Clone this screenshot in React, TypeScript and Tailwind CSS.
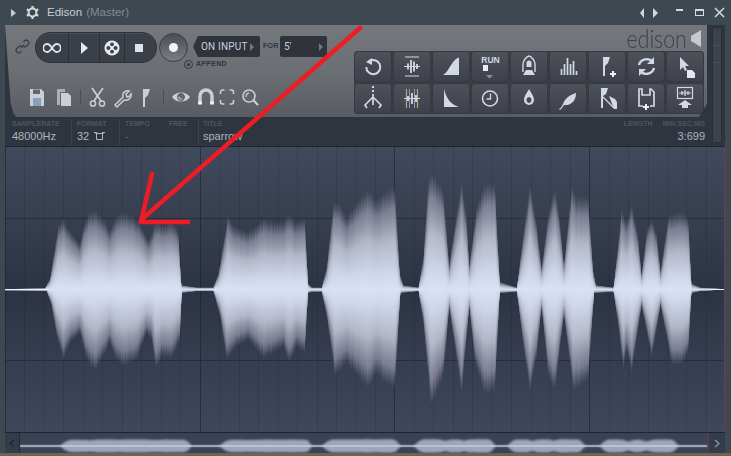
import React from "react";

const z3 = (p: number[]) => [p[0] / 3, p[1] / 3 + 150];
const z4 = (p: number[]) => [p[0] / 3 + 360, p[1] / 3 + 150];
const up3 = [[15,416],[135,414],[150,385],[160,320],[175,225],[190,205],[205,235],[240,280],[250,230],[265,190],[285,180],[310,205],[330,240],[345,205],[365,185],[395,195],[420,220],[445,270],[455,250],[468,215],[490,225],[515,215],[535,240],[545,405],[590,412],[640,412],[655,370],[670,280],[683,195],[700,225],[740,245],[760,235],[790,205],[820,215],[850,215],[868,190],[885,215],[915,205],[925,400],[935,412],[965,412],[980,350],[1000,160],[1015,155],[1040,200],[1075,150]];
const up4 = [[25,118],[50,150],[75,125],[105,110],[120,370],[130,405],[175,412],[190,320],[205,90],[215,65],[250,120],[268,340],[285,220],[305,95],[320,200],[328,340],[350,170],[375,100],[405,100],[420,395],[470,412],[490,250],[510,100],[530,220],[545,350],[565,190],[585,110],[600,210],[612,340],[635,105],[650,140],[685,140],[700,360],[708,405],[760,412],[770,320],[785,175],[800,215],[815,160],[835,260],[845,370],[860,240],[875,205],[890,250],[902,360],[925,195],[945,190],[965,185],[985,200],[995,400],[1020,412],[1090,416]];
const lo3 = [[15,422],[140,424],[155,470],[170,560],[190,630],[210,580],[240,550],[260,630],[285,665],[310,620],[330,580],[345,625],[370,650],[410,630],[440,550],[455,570],[468,660],[485,620],[515,625],[540,570],[546,430],[590,424],[640,424],[660,500],[680,630],[710,590],[745,570],[790,625],[820,610],[850,590],[868,640],[890,590],[915,610],[925,430],[935,426],[965,426],[980,500],[1005,680],[1040,640],[1075,680]];
const lo4 = [[25,715],[50,670],[75,700],[105,715],[122,430],[175,424],[190,520],[213,770],[250,680],[268,480],[305,735],[328,480],[345,640],[375,735],[405,720],[420,430],[470,426],[490,590],[510,730],[530,620],[545,480],[565,680],[585,725],[612,500],[640,725],[685,690],[703,430],[760,426],[775,530],[790,660],[800,600],[815,670],[845,470],[875,625],[902,470],[935,645],[965,645],[985,610],[995,430],[1020,424],[1090,420]];
const upPts = [...up3.map(z3), ...up4.map(z4)];
const loPts = [...lo3.map(z3), ...lo4.map(z4)];
const interp = (pts: number[][], x: number) => {
  if (x <= pts[0][0]) return pts[0][1];
  for (let i = 1; i < pts.length; i++) {
    if (x <= pts[i][0]) {
      const t = (x - pts[i - 1][0]) / (pts[i][0] - pts[i - 1][0]);
      return pts[i - 1][1] + (pts[i][1] - pts[i - 1][1]) * t;
    }
  }
  return pts[pts.length - 1][1];
};
const CY = 289.6;
const noise = (x: number) => 0.5 * Math.sin(x * 2.3) + 0.3 * Math.sin(x * 5.1 + 1) + 0.2 * Math.sin(x * 0.9 + 2);
const xs = Array.from({ length: 720 }, (_, i) => i + 5);
const cols = xs.map((x) => {
  const u = CY - interp(upPts, x + 0.5);
  const l = interp(loPts, x + 0.5) - CY;
  const n = noise(x);
  return { x, u: u > 6 ? u * (1 + 0.025 * n) : u, l: l > 6 ? l * (1 + 0.025 * n) : l };
});
const vGrid = Array.from({ length: 37 }, (_, i) => 5.5 + Math.round(i * 19.47));

const stops = (
  <>
    <stop offset="0" stopColor="#7d7f94" stopOpacity="0" />
    <stop offset="0.2" stopColor="#8b8da1" stopOpacity="0.8" />
    <stop offset="0.5" stopColor="#b2b5c8" />
    <stop offset="0.85" stopColor="#d0d9ec" />
    <stop offset="1" stopColor="#d8e2f3" />
  </>
);

function Wave() {
  return (
    <svg viewBox="5 147 720 285" className="block w-full h-full" preserveAspectRatio="none" shapeRendering="crispEdges">
      <defs>
        <linearGradient id="bg" x1="0" y1="0" x2="0" y2="1">
          <stop offset="0" stopColor="#414a5c" />
          <stop offset="0.5" stopColor="#2c3345" />
          <stop offset="1" stopColor="#3f485b" />
        </linearGradient>
        <linearGradient id="up" x1="0" y1="0" x2="0" y2="1">{stops}</linearGradient>
        <linearGradient id="lo" x1="0" y1="1" x2="0" y2="0">{stops}</linearGradient>
      </defs>
      <rect x="5" y="147" width="720" height="285" fill="url(#bg)" />
      {vGrid.map((x, i) => (
        <line key={i} x1={x} x2={x} y1="147" y2="432" stroke="#1c2230" strokeOpacity={i % 10 === 0 ? 0.65 : 0.22} strokeWidth="1" />
      ))}
      <line x1="5" x2="725" y1="218.5" y2="218.5" stroke="#1c2230" strokeOpacity="0.55" />
      <line x1="5" x2="725" y1="360.5" y2="360.5" stroke="#1c2230" strokeOpacity="0.55" />
      {cols.map((c) => (
        <g key={c.x}>
          <rect x={c.x} y={CY - c.u} width="1" height={c.u} fill="url(#up)" />
          <rect x={c.x} y={CY} width="1" height={c.l} fill="url(#lo)" />
        </g>
      ))}
      <rect x="5" y="289" width="42" height="1" fill="#eef2fa" />
      <rect x="710" y="289" width="15" height="1" fill="#eef2fa" />
      <rect x="724" y="147" width="1" height="285" fill="#6a4250" />
    </svg>
  );
}

function Overview() {
  const ampAt = (x: number) => {
    let s = 0;
    for (let d = -3; d <= 3; d++) s += interp(loPts, x + d) - interp(upPts, x + d);
    return s / 7 / 2;
  };
  const k = 0.955;
  const top: string[] = [];
  const bot: string[] = [];
  for (let x = 5; x <= 725; x += 2) {
    const a = Math.max(0.4, 6.8 * (1 - Math.exp(-(ampAt(x) - 3) / 24)));
    const ox = (x - 5) * k;
    top.push(`${ox.toFixed(1)},${(13 - a).toFixed(1)}`);
    bot.unshift(`${ox.toFixed(1)},${(13 + a).toFixed(1)}`);
  }
  return (
    <svg viewBox="0 0 689 20" className="block w-full h-full">
      <polygon points={[...top, ...bot].join(" ")} fill="#9ca6bd" className="blur-[0.8px]" />
      <rect x="0" y="12.4" width="687" height="1.2" fill="#cdd5e4" />
      <rect x="688" y="0" width="1" height="20" fill="#6a3a48" />
    </svg>
  );
}

const C = "#d3d9e4";
const Icon = ({ children, w = 38, h = 31 }: { children: React.ReactNode; w?: number; h?: number }) => (
  <svg width={w} height={h} viewBox={`0 0 ${w} ${h}`} fill="none" className="block">
    {children}
  </svg>
);
const row1: React.ReactNode[] = [
  <>
    <path d="M15 10.6A7 7 0 1 1 12.3 16" stroke={C} strokeWidth="2" />
    <path d="M12 11l6-4v7z" fill={C} />
  </>,
  <>
    <path d="M12 6h14M12 25h14" stroke={C} strokeWidth="1.2" />
    <path d="M11 15.5h16" stroke={C} strokeWidth="1.2" />
    <path d="M15 12.5v6M18 9v13M21 10.5v10M24 13v5" stroke={C} strokeWidth="1.8" />
  </>,
  <path d="M11 24c6-3 9-16 16-17.5V24z" fill={C} />,
  <>
    <text x="19.5" y="11.5" textAnchor="middle" fill={C} fontSize="8.5" fontWeight="700" fontFamily="'Liberation Sans',sans-serif">RUN</text>
    <rect x="12" y="14" width="5" height="6" fill="#e8ecf3" />
    <path d="M15 24h7l-3.5 3.5z" fill="#8b9099" />
  </>,
  <>
    <path d="M13 21v-8c0-3 3-7 6-8 3 1 6 5 6 8v8" stroke={C} strokeWidth="1.4" />
    <path d="M16.5 12a2.5 2.5 0 0 1 5 0v4h-5zM13 24l3-5h6l3 5z" fill={C} />
  </>,
  <path d="M12.5 24v-6M15.5 24v-11M18.5 24v-17M21.5 24v-11M24.5 24v-14M27.5 24v-4" stroke={C} strokeWidth="1.7" />,
  <>
    <path d="M15 25V6h7l-2 6-3 3v10z" fill={C} />
    <path d="M22 23h6M25 20v6" stroke="#eef1f6" strokeWidth="2" />
  </>,
  <>
    <path d="M12 14c1-5 8-8 13-4M27 17c-1 5-8 8-13 4" stroke={C} strokeWidth="2.4" />
    <path d="M27 6v7h-7zM12 25v-7h7z" fill={C} />
  </>,
  <>
    <path d="M14 6v13l3-3 2 4 2-1-2-4h4z" fill={C} />
    <path d="M21 19h5l3 3v5h-8z" fill="#e4e8ef" />
  </>,
];
const row2: React.ReactNode[] = [
  <>
    <path d="M19 3v2M19 7v2" stroke={C} strokeWidth="2" />
    <path d="M19 11v5M19 14L11 22l2 3M19 14l8 8-2 3M19 16v6" stroke={C} strokeWidth="1.7" />
  </>,
  <>
    <path d="M13.5 6v19M24.5 6v19" stroke="#b8a48c" strokeWidth="1.2" />
    <path d="M16.5 6v19M21.5 6v19" stroke="#8f9db2" strokeWidth="1" />
    <path d="M11 15.5h16" stroke={C} strokeWidth="1.2" />
    <path d="M15 13v5M19 10v11M23 12v7" stroke={C} strokeWidth="1.8" />
  </>,
  <path d="M12 6c2 9 7 16 15 18H12z" fill={C} />,
  <>
    <circle cx="19" cy="15.5" r="7.5" stroke={C} strokeWidth="1.6" />
    <path d="M19.5 10.5v5.5h-4" stroke={C} strokeWidth="1.3" />
  </>,
  <path fillRule="evenodd" d="M19 6c2 4 5 7 5 11a5 5 0 0 1-10 0c0-4 3-7 5-11zM19 14a2.5 3 0 1 0 .01 0z" fill={C} />,
  <path d="M10 26c2-1 3-3 4-5 2-6 7-9 13-11 0 6-3 11-9 12l-3 0c-1 2-3 4-4 5z" fill={C} />,
  <>
    <path d="M13 25V5h7l-2 6-3 2v12z" fill={C} />
    <path d="M15 14l11 11" stroke={C} strokeWidth="1.3" />
    <path d="M21 13l6 3 2 3v7h-3z" fill={C} />
  </>,
  <>
    <path d="M16 23h-4V6h3v6h8V6h1l3 3v14h-4" stroke={C} strokeWidth="1.7" />
    <path d="M16 24h6M19 21v6" stroke="#eef1f6" strokeWidth="2" />
  </>,
  <>
    <rect x="11.5" y="4.5" width="15" height="11" stroke={C} strokeWidth="1.2" />
    <path d="M13 10h12" stroke={C} strokeWidth="1" />
    <path d="M16 8v4M19 7v6M22 8v4" stroke={C} strokeWidth="1.3" />
    <path d="M12 22l7-5 7 5zM16 22h6v3h-6z" fill={C} />
  </>,
];

const ToolBtn = ({ children }: { children: React.ReactNode }) => (
  <div className="w-[38px] h-[31px] rounded-[4px] bg-gradient-to-b from-[#4d515a] to-[#3e4149] shadow-[inset_0_0_0_1px_#363940]">
    <Icon>{children}</Icon>
  </div>
);

const Label = ({ children, className = "" }: { children: React.ReactNode; className?: string }) => (
  <div className={`text-[7px] leading-[10px] font-bold text-[#4d555e] whitespace-nowrap ${className}`}>{children}</div>
);
const Value = ({ children }: { children: React.ReactNode }) => (
  <div className="text-[11px] leading-[14px] text-[#aeb6bf] whitespace-nowrap">{children}</div>
);
const L = "#c9d0d8";
const BarIcon = ({ children, w = 20 }: { children: React.ReactNode; w?: number }) => (
  <Icon w={w} h={22}>{children}</Icon>
);

export default function App() {
  return (
    <div className="relative w-[731px] h-[456px] overflow-hidden bg-[#3e4850] flex flex-col font-['Liberation_Sans',sans-serif]">
      {/* title bar */}
      <div className="h-[25px] flex items-center shrink-0 pl-[11px] pr-[6px]">
        <div className="w-0 h-0 border-y-[4px] border-y-transparent border-l-[5px] border-l-[#c3ccd2]" />
        <svg width="13" height="13" viewBox="0 0 14 14" className="ml-[10px]" fill="none">
          <circle cx="7" cy="7" r="4.2" stroke="#d3dae0" strokeWidth="2.2" />
          <path d="M7 0v3M7 11v3M0.9 3.5l2.6 1.5M10.5 9l2.6 1.5M0.9 10.5l2.6-1.5M10.5 5l2.6-1.5" stroke="#d3dae0" strokeWidth="2.4" />
        </svg>
        <span className="ml-[8px] text-[11.5px] text-[#c6cfd5]">Edison</span>
        <span className="ml-[4px] text-[11.5px] text-[#7f8b94]">(Master)</span>
        <div className="ml-auto flex items-center">
          <div className="w-0 h-0 border-y-[5px] border-y-transparent border-r-[4px] border-r-[#d0d7dc]" />
          <div className="ml-[9px] w-0 h-0 border-y-[5px] border-y-transparent border-l-[5px] border-l-[#d0d7dc]" />
          <div className="ml-[18px] w-[7px] h-[2px] bg-[#d5dbe0] mb-[6px]" />
          <div className="ml-[12px] w-[9px] h-[7px] border border-t-2 border-[#d5dbe0]" />
          <svg width="11" height="11" viewBox="0 0 11 11" className="ml-[10px]" stroke="#d5dbe0" strokeWidth="1.5"><path d="M1 1l9 9M10 1l-9 9" /></svg>
        </div>
      </div>

      {/* main */}
      <div className="ml-[5px] w-[720px] flex-1 flex flex-col">
        {/* upper */}
        <div className="h-[121px] bg-[#2f353e] flex shrink-0">
          <div className="w-[702px] flex flex-col">
            <div className="h-[92px] bg-gradient-to-b from-[#74777c] via-[#6b6e73] to-[#595c62] flex [clip-path:polygon(0_0,100%_0,100%_86%,99%_98%,98.8%_100%,1.6%_100%,1.2%_96%,0.8%_85%)]">
              <div className="w-[349px] pl-[9px] pt-[7px] flex flex-col">
                <div className="flex items-start">
                  <svg width="17" height="17" viewBox="0 0 17 17" className="mt-[6px]" fill="none" stroke="#3d4149" strokeWidth="1.4">
                    <path d="M7 10l3.2-3.2M9.5 4l1.4-1.4a2.6 2.6 0 0 1 3.6 3.6L12.6 8.1a2.6 2.6 0 0 1-3.6 0M7.5 13l-1.4 1.4a2.6 2.6 0 0 1-3.6-3.6L4.4 8.9a2.6 2.6 0 0 1 3.6 0" />
                  </svg>
                  <div className="ml-[4px] w-[122px] h-[31px] rounded-[15px] bg-[#3b3f47] border border-[#2f3238] flex items-stretch overflow-hidden shadow-[inset_0_1px_0_#4a4e56]">
                    <div className="w-[33px] border-r border-[#2c2f35] flex items-center justify-center">
                      <svg width="18" height="12" viewBox="0 0 18 12" fill="none" stroke="#dbe1ea" strokeWidth="1.8"><path d="M9 6C7 3 6 2 4.3 2a4 4 0 0 0 0 8C6 10 7 9 9 6c2-3 3-4 4.7-4a4 4 0 0 1 0 8C12 10 11 9 9 6z" /></svg>
                    </div>
                    <div className="w-[31px] border-r border-[#2c2f35] flex items-center justify-center">
                      <div className="w-0 h-0 border-y-[6px] border-y-transparent border-l-[7px] border-l-[#e3e8ef]" />
                    </div>
                    <div className="w-[25px] border-r border-[#2c2f35] flex items-center justify-center">
                      <svg width="16" height="16" viewBox="0 0 16 16" fill="#e3e8ef"><path fillRule="evenodd" d="M8 0.5a7.5 7.5 0 1 1-.01 0zM8 2.5a1.9 1.9 0 1 0 .01 0zM8 9.7a1.9 1.9 0 1 0 .01 0zM4.4 6.1a1.9 1.9 0 1 0 .01 0zM11.6 6.1a1.9 1.9 0 1 0 .01 0z" /></svg>
                    </div>
                    <div className="flex-1 flex items-center justify-center pr-[4px]">
                      <div className="w-[8px] h-[8px] bg-[#dfe4ea]" />
                    </div>
                  </div>
                  <div className="ml-[2px] w-[29px] h-[29px] mt-px rounded-full bg-gradient-to-b from-[#4a4d54] to-[#7b7e84] border border-[#3c3f46] flex items-center justify-center">
                    <div className="w-[9px] h-[9px] rounded-full bg-[#f1f3f6]" />
                  </div>
                  <div className="flex flex-col">
                    <div className="flex items-center mt-[4px]">
                      <div className="ml-[5px] w-[67px] h-[21px] bg-[#2f333b] rounded-[2px] flex items-center pl-[8px] [clip-path:polygon(5px_0,100%_0,100%_100%,5px_100%,0_50%)]">
                        <span className="font-['Roboto',sans-serif] text-[10px] w-[46px] tracking-[0.2px] text-[#c9d1da] whitespace-nowrap">ON INPUT</span>
                        <div className="ml-[3px] w-0 h-0 border-y-[4px] border-y-transparent border-l-[4px] border-l-[#717782]" />
                      </div>
                      <span className="ml-[3px] w-[17px] text-[7px] font-bold tracking-[0.3px] text-[#30343c]">FOR</span>
                      <div className="w-[47px] h-[21px] bg-[#2f333b] rounded-[2px] flex items-center justify-between pl-[4px] pr-[4px]">
                        <span className="font-['Roboto',sans-serif] text-[10px] text-[#c9d1da]">5'</span>
                        <div className="w-0 h-0 border-y-[4px] border-y-transparent border-l-[4px] border-l-[#717782]" />
                      </div>
                    </div>
                    <div className="flex items-center -ml-[4px] mt-[2px]">
                      <div className="w-[9px] h-[9px] rounded-full border border-[#33373e] flex items-center justify-center">
                        <div className="w-[3px] h-[3px] rounded-full bg-[#33373e]" />
                      </div>
                      <span className="ml-[3px] text-[7px] font-bold tracking-[0.3px] text-[#30343c]">APPEND</span>
                    </div>
                  </div>
                </div>
                <div className="flex items-center mt-[16px] ml-[13px]">
                  <BarIcon>
                    <path d="M3 3h11l3 3v14H3z" fill={L} />
                    <rect x="6" y="3.5" width="7" height="4.5" fill="#62656b" />
                    <rect x="6" y="12" width="8" height="8" fill="#8b9fb8" />
                  </BarIcon>
                  <div className="ml-[7px]">
                    <BarIcon>
                      <path d="M3 3h8v3H6v13H3z" fill="#aab0b8" />
                      <path d="M7 7h7l3 3v10H7z" fill={L} />
                    </BarIcon>
                  </div>
                  <div className="ml-[6px] w-px h-[14px] bg-[#4a4d53]" />
                  <div className="ml-[7px]">
                    <BarIcon>
                      <path d="M4 2l9 13M15 2L6 15" stroke={L} strokeWidth="1.7" />
                      <circle cx="5" cy="17.5" r="2.6" stroke={L} strokeWidth="1.5" />
                      <circle cx="14" cy="17.5" r="2.6" stroke={L} strokeWidth="1.5" />
                    </BarIcon>
                  </div>
                  <div className="ml-[4px]">
                    <BarIcon>
                      <path d="M3 19l8-8c-1-4 2-7 6-6l-3 3 1 3 3-1 1-2c1 4-3 7-7 6l-7 7z" stroke={L} strokeWidth="1.5" />
                    </BarIcon>
                  </div>
                  <div className="ml-[6px] w-[16px]">
                    <BarIcon w={16}>
                      <path d="M5 21V3h7l-2 6-3 3v9z" fill={L} />
                    </BarIcon>
                  </div>
                  <div className="ml-[9px] w-px h-[14px] bg-[#4a4d53]" />
                  <div className="ml-[7px]">
                    <BarIcon w={20}>
                      <path fillRule="evenodd" d="M1 11c4-6 14-6 18 0-4 6-14 6-18 0zM10 7a4 4 0 1 0 .01 0z" fill={L} />
                      <path d="M7 10a3 3 0 0 0 5 3z" fill="#8aa0bb" />
                    </BarIcon>
                  </div>
                  <div className="ml-[5px]">
                    <BarIcon w={20}>
                      <path d="M4 18V10a6 6 0 0 1 12 0v8" stroke={L} strokeWidth="3.4" />
                      <path d="M2 17h4M14 17h4" stroke="#eef1f5" strokeWidth="3" />
                    </BarIcon>
                  </div>
                  <div className="ml-[1px]">
                    <BarIcon w={20}>
                      <path d="M3.5 8V6a2 2 0 0 1 2-2h2M12.5 4h2a2 2 0 0 1 2 2v2M16.5 14v2a2 2 0 0 1-2 2h-2M7.5 18h-2a2 2 0 0 1-2-2v-2" stroke={L} strokeWidth="1.6" />
                    </BarIcon>
                  </div>
                  <div className="ml-[3px]">
                    <BarIcon w={20}>
                      <circle cx="9" cy="10" r="6" stroke={L} strokeWidth="1.6" />
                      <path d="M6 11a3.5 3.5 0 0 1 3-4" stroke={L} strokeWidth="1.3" />
                      <path d="M13.5 14.5L18 19" stroke={L} strokeWidth="2.2" />
                    </BarIcon>
                  </div>
                </div>
              </div>
              <div className="flex-1 flex flex-col">
                <div className="h-[26px] flex items-start justify-end pr-[5px] pt-[1px]">
                  <span className="text-[25px] leading-[24px] font-['Lato',sans-serif] font-light text-[#3d4148] scale-x-[0.85] origin-right">edison</span>
                  <svg width="11" height="17" viewBox="0 0 11 17" className="ml-[4px] mt-[4px]" fill="#c5cad1"><path d="M0 6l10-6v17L0 11z" /></svg>
                </div>
                <div className="self-start bg-[#3a3d44] rounded-[5px] grid grid-cols-9 gap-[1px] p-0">
                  {[...row1, ...row2].map((ic, i) => (
                    <ToolBtn key={i}>{ic}</ToolBtn>
                  ))}
                </div>
              </div>
            </div>
            {/* info */}
            <div className="flex-1 flex pt-[2px] pl-[7px] pr-[2px]">
              <div className="w-[60px] border-r border-[#3b424b]"><Label>SAMPLERATE</Label><Value>48000Hz</Value></div>
              <div className="w-[48px] pl-[5px] border-r border-[#3b424b]">
                <Label>FORMAT</Label>
                <div className="flex items-center"><Value>32</Value>
                  <svg width="11" height="10" viewBox="0 0 11 10" className="ml-[5px]" fill="none" stroke="#aeb6bf"><path d="M1.5 2.5h8M2.5 2v6.5h6V2" /><path d="M0 1.5h3M8 1.5h3" /></svg>
                </div>
              </div>
              <div className="w-[49px] pl-[5px]"><Label>TEMPO</Label><Value><span className="text-[#5f6770]">-</span></Value></div>
              <div className="w-[30px] border-r border-[#3b424b]"><Label>FREE</Label></div>
              <div className="pl-[4px]"><Label>TITLE</Label><Value>sparrow</Value></div>
              <div className="ml-auto flex flex-col items-end">
                <div className="flex"><Label>LENGTH</Label><Label className="ml-[10px]">MIN:SEC:MS</Label></div>
                <Value>3:699</Value>
              </div>
            </div>
          </div>
          {/* scrollbar */}
          <div className="ml-[5px] mt-[2px] mb-[3px] w-[10px] rounded-[2px] bg-[#3c4249] border border-[#2b3037]">
            <div className="mt-[17px] h-px bg-[#4a5058]" />
            <div className="mt-[16px] h-px bg-[#4a5058]" />
          </div>
        </div>
        <div className="h-px bg-[#20252d] shrink-0" />
        {/* waveform */}
        <div className="h-[285px] shrink-0">
          <Wave />
        </div>
        <div className="h-px bg-[#1f2430] shrink-0" />
        {/* overview */}
        <div className="h-[20px] shrink-0 flex bg-[#3b4255]">
          <div className="w-[15px] bg-[#343b4b] border-r border-[#232936] flex items-center justify-center">
            <svg width="6" height="9" viewBox="0 0 6 9" fill="none" stroke="#1e2330" strokeWidth="1.2"><path d="M5 1L1 4.5 5 8" /></svg>
          </div>
          <div className="w-[689px]"><Overview /></div>
          <div className="w-[16px] bg-[#343b4b] flex items-center justify-center">
            <svg width="6" height="9" viewBox="0 0 6 9" fill="none" stroke="#949aaa" strokeWidth="1.2"><path d="M1 1l4 3.5L1 8" /></svg>
          </div>
        </div>
      </div>
      <div className="h-[3px] bg-[#6b6450] shrink-0" />

      {/* red annotation arrow */}
      <svg width="731" height="456" className="absolute left-0 top-0 pointer-events-none" fill="none" stroke="#ee1c25" strokeLinecap="round" strokeLinejoin="round">
        <path d="M360 28L141 220" strokeWidth="4.5" />
        <path d="M152 174L141 222H188" strokeWidth="4.5" />
      </svg>
    </div>
  );
}
